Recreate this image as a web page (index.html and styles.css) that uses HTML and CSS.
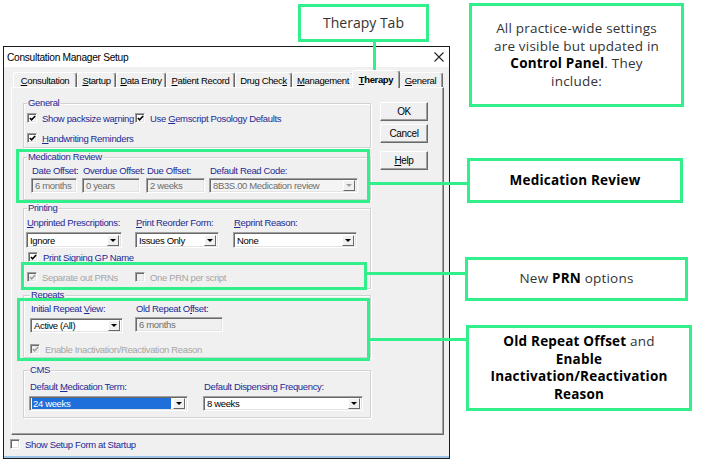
FILE: index.html
```html
<!DOCTYPE html>
<html>
<head>
<meta charset="utf-8">
<link rel="stylesheet" href="styles.css">
</head>
<body>
<div class="canvas">
  <div class="dialog">
    <div class="titlebar">
      <span class="title">Consultation Manager Setup</span>
      <svg class="close" width="10" height="10" viewBox="0 0 10 10"><path d="M0.5 0.5 L9.5 9.5 M9.5 0.5 L0.5 9.5" stroke="#222" stroke-width="1.1" fill="none"/></svg>
    </div>
    <div class="dlgbody">
      <div class="tabs">
        <div class="tab t-cons"><span><u>C</u>onsultation</span></div>
        <div class="tab t-start"><span><u>S</u>tartup</span></div>
        <div class="tab t-data"><span><u>D</u>ata Entry</span></div>
        <div class="tab t-pat"><span><u>P</u>atient Record</span></div>
        <div class="tab t-drug"><span>Drug Chec<u>k</u></span></div>
        <div class="tab t-man"><span><u>M</u>anagement</span></div>
        <div class="tab t-ther active"><span><u>T</u>herapy</span></div>
        <div class="tab t-gen"><span><u>G</u>eneral</span></div>
      </div>
      <div class="panel">
        <div class="groups">
          <fieldset class="group g-general">
            <legend>General</legend>
            <div class="row r-gen1">
              <label class="chk w-pack"><span class="cb"><svg viewBox="0 0 8 8"><path d="M1 3.4 L3 5.6 L7 1.2" /></svg></span><span class="t">Show packsize wa<u>r</u>ning</span></label>
              <label class="chk"><span class="cb"><svg viewBox="0 0 8 8"><path d="M1 3.4 L3 5.6 L7 1.2" /></svg></span><span class="t">Use <u>G</u>emscript Posology Defaults</span></label>
            </div>
            <div class="row r-gen2">
              <label class="chk"><span class="cb"><svg viewBox="0 0 8 8"><path d="M1 3.4 L3 5.6 L7 1.2" /></svg></span><span class="t"><u>H</u>andwriting Reminders</span></label>
            </div>
          </fieldset>

          <fieldset class="group g-mr">
            <legend>Medication Review</legend>
            <div class="grid mr-grid">
              <span class="lbl">Date Offset:</span>
              <span class="lbl">Overdue Offset:</span>
              <span class="lbl">Due Offset:</span>
              <span class="lbl">Default Read Code:</span>
              <span class="edit dis w46">6 months</span>
              <span class="edit dis w58">0 years</span>
              <span class="edit dis w59">2 weeks</span>
              <span class="combo dis w149"><span class="val">8B3S.00 Medication review</span><span class="btn"><i class="tri"></i></span></span>
            </div>
          </fieldset>

          <fieldset class="group g-print">
            <legend>Printing</legend>
            <div class="grid pr-grid">
              <span class="lbl"><span><u>U</u>nprinted Prescriptions:</span></span>
              <span class="lbl"><span><u>P</u>rint Reorder Form:</span></span>
              <span class="lbl"><span><u>R</u>eprint Reason:</span></span>
              <span class="combo w96"><span class="val">Ignore</span><span class="btn"><i class="tri"></i></span></span>
              <span class="combo w84"><span class="val">Issues Only</span><span class="btn"><i class="tri"></i></span></span>
              <span class="combo w124"><span class="val">None</span><span class="btn"><i class="tri"></i></span></span>
            </div>
            <div class="row r-sign">
              <label class="chk"><span class="cb"><svg viewBox="0 0 8 8"><path d="M1 3.4 L3 5.6 L7 1.2" /></svg></span><span class="t">Print <u>S</u>igning GP Name</span></label>
            </div>
            <div class="row r-prn">
              <label class="chk dis w-sep"><span class="cb"><svg viewBox="0 0 8 8"><path d="M1 3.4 L3 5.6 L7 1.2" /></svg></span><span class="t">Separate out PRNs</span></label>
              <label class="chk dis"><span class="cb"></span><span class="t">One PRN per script</span></label>
            </div>
          </fieldset>

          <fieldset class="group g-rep">
            <legend>Repeats</legend>
            <div class="grid rep-grid">
              <span class="lbl"><span>Initial Repeat <u>V</u>iew:</span></span>
              <span class="lbl"><span>Old Repeat O<u>f</u>fset:</span></span>
              <span class="combo w93"><span class="val">Active (All)</span><span class="btn"><i class="tri"></i></span></span>
              <span class="edit dis w88">6 months</span>
            </div>
            <div class="row r-enable">
              <label class="chk dis"><span class="cb"><svg viewBox="0 0 8 8"><path d="M1 3.4 L3 5.6 L7 1.2" /></svg></span><span class="t">Enable Inactivation/Reactivation Reason</span></label>
            </div>
          </fieldset>

          <fieldset class="group g-cms">
            <legend>CMS</legend>
            <div class="grid cms-grid">
              <span class="lbl"><span>Default <u>M</u>edication Term:</span></span>
              <span class="lbl">Default Dispensing Frequency:</span>
              <span class="combo w159 sel"><span class="val">24 weeks</span><span class="btn"><i class="tri"></i></span></span>
              <span class="combo w160"><span class="val">8 weeks</span><span class="btn"><i class="tri"></i></span></span>
            </div>
          </fieldset>
        </div>
        <div class="buttons">
          <div class="button b-ok">OK</div>
          <div class="button b-cancel">Cancel</div>
          <div class="button b-help"><span><u>H</u>elp</span></div>
        </div>
      </div>
      <div class="row r-footer">
        <label class="chk"><span class="cb"></span><span class="t">Show Setup Form at Startup</span></label>
      </div>
    </div>
    <div class="strip"></div>
  </div>

  <div class="hl h-mr"></div>
  <div class="hl h-prn"></div>
  <div class="hl h-rep"></div>

  <div class="wire w-tab"></div>
  <div class="dot"></div>
  <div class="wire w-mr"></div>
  <div class="wire w-prn"></div>
  <div class="wire w-rep"></div>

  <div class="callout c-tab"><span class="txt">Therapy Tab</span></div>
  <div class="callout c-info"><span class="txt">All practice-wide settings<br>are visible but updated in<br><b>Control Panel</b>. They<br>include:</span></div>
  <div class="callout c-mr"><span class="txt"><b>Medication Review</b></span></div>
  <div class="callout c-prn"><span class="txt">New <b>PRN</b> options</span></div>
  <div class="callout c-rep"><span class="txt"><b>Old Repeat Offset</b> and<br><b>Enable</b><br><b>Inactivation/Reactivation</b><br><b>Reason</b></span></div>
</div>
</body>
</html>
```
FILE: styles.css
```css
* { box-sizing: border-box; }
html, body { margin: 0; padding: 0; background: #fff; }
body { width: 716px; height: 459px; overflow: hidden; }
.canvas { position: relative; display: flow-root; width: 716px; height: 459px; }

/* ---------- dialog ---------- */
.dialog {
  margin: 46px 0 0 3px;
  width: 447px;
  height: 413px;
  border: 1px solid #1b1b1b;
  background: #f0f0f0;
  display: flex;
  flex-direction: column;
  font-family: "Liberation Sans", Arial, sans-serif;
  font-size: 9.5px;
  letter-spacing: -0.35px;
  color: #000;
}
.titlebar {
  height: 20px;
  background: #fff;
  display: flex;
  align-items: center;
  justify-content: space-between;
  padding: 0 5px 0 3px;
  font-size: 10.2px;
  letter-spacing: -0.3px;
}
.close { display: block; }
.dlgbody {
  flex: 1;
  display: flex;
  flex-direction: column;
  padding: 3px 5px 0 7px;
}
.tabs {
  display: flex;
  align-items: flex-end;
  height: 17px;
  margin-left: 2px;
}
.tab {
  height: 15px;
  border: 1px solid;
  border-color: #fff #696969 transparent #fff;
  border-bottom: none;
  border-radius: 3px 3px 0 0;
  box-shadow: inset -1px 0 0 #a0a0a0;
  display: flex;
  align-items: center;
  justify-content: center;
  white-space: nowrap;
  background: #f0f0f0;
}
.t-cons { width: 64px; }
.t-start { width: 39px; }
.t-data { width: 50px; }
.t-pat { width: 69px; }
.t-drug { width: 57px; }
.t-man { width: 62px; }
.t-ther { width: 44px; }
.t-gen { width: 45px; }
.tab.active {
  width: 48px;
  height: 18px;
  margin: 0 -2px -1px;
  font-weight: bold;
  position: relative;
  z-index: 1;
}
.panel {
  height: 348px;
  border: 1px solid;
  border-color: #fff #696969 #696969 #fff;
  box-shadow: inset -1px -1px 0 #a0a0a0;
  display: flex;
  padding: 9px 0 0 11px;
}
.groups {
  width: 348px;
  display: flex;
  flex-direction: column;
}
.group {
  margin: 0;
  padding: 0 0 0 3px;
  min-width: 0;
  border: 1px solid #cfd3d6;
  box-shadow: inset 1px 1px 0 #fff, 1px 1px 0 #fff;
  color: #1d2a93;
}
.group legend {
  padding: 0 1px;
  height: 12px;
  line-height: 12px;
  background: #f0f0f0;
}
.g-general { height: 51px; padding-top: 2px; }
.g-mr { height: 49px; margin-top: 3px; padding-top: 2px; }
.g-print { height: 87px; margin-top: 2px; padding-top: 3px; }
.g-rep { height: 69px; margin-top: 0; padding-top: 2px; padding-left: 6px; }
.g-cms { height: 54px; margin-top: 6px; padding-top: 5px; padding-left: 5px; }

.row { display: flex; align-items: center; height: 14px; }
.r-gen2 { margin-top: 6px; }
.r-sign { margin-top: 2px; padding-left: 1px; }
.r-prn { margin-top: 6px; }
.r-enable { margin-top: 9px; }
.r-footer { margin-top: 2px; margin-left: -1px; color: #1d2a93; }

.chk { display: flex; align-items: center; white-space: nowrap; }
.chk .t { white-space: pre; }
.chk .cb {
  flex: none;
  width: 10px;
  height: 10px;
  margin-right: 5px;
  background: #fff;
  border: 1px solid;
  border-color: #a0a0a0 #fff #fff #a0a0a0;
  box-shadow: inset 1px 1px 0 #696969, inset -1px -1px 0 #e3e3e3;
  display: flex;
  align-items: center;
  justify-content: center;
}
.chk .cb svg { width: 7px; height: 7px; display: block; }
.chk .cb svg path { fill: none; stroke: #000; stroke-width: 1.8; }
.chk.dis { color: #a6a6a6; }
.chk.dis .cb { background: #f0f0f0; }
.chk.dis .cb svg path { stroke: #a0a0a0; }
.w-pack { width: 108px; }
.w-sep { width: 108px; }

.grid { display: grid; }
.lbl { display: block; height: 12px; line-height: 12px; white-space: nowrap; padding-left: 1px; }
.mr-grid { grid-template-columns: 51px 64px 63px 149px; row-gap: 1px; margin-left: 4px; }
.pr-grid { grid-template-columns: 109px 98px 124px; row-gap: 3px; margin-left: -1px; }
.rep-grid { grid-template-columns: 105px 88px; row-gap: 2px; align-items: start; }
.cms-grid { grid-template-columns: 174px 160px; row-gap: 3px; }

.edit, .combo {
  display: flex;
  align-items: center;
  height: 15px;
  background: #fff;
  border: 1px solid;
  border-color: #a0a0a0 #fff #fff #a0a0a0;
  box-shadow: inset 1px 1px 0 #696969, inset -1px -1px 0 #e3e3e3;
  color: #000;
  white-space: nowrap;
  overflow: hidden;
}
.pr-grid .combo { height: 16px; }
.edit { padding-left: 3px; }
.edit.dis { background: #f0f0f0; color: #6d6d6d; }
.combo .val { flex: 1; padding-left: 3px; overflow: hidden; }
.combo .btn {
  flex: none;
  width: 12px;
  height: 11px;
  margin-right: 2px;
  border: 1px solid;
  border-color: #fff #696969 #696969 #fff;
  background: #f0f0f0;
  display: flex;
  align-items: center;
  justify-content: center;
}
.tri {
  display: block;
  width: 0;
  height: 0;
  border-top: 3px solid #000;
  border-left: 3px solid transparent;
  border-right: 3px solid transparent;
}
.combo.dis { background: #f4f4f4; color: #6d6d6d; }
.combo.dis .tri { border-top-color: #a0a0a0; }
.combo.sel .val {
  background: #1e6fd9;
  color: #fff;
  height: 11px;
  line-height: 11px;
  margin-left: 2px;
  padding-left: 1px;
  margin-right: 2px;
}
.w46 { width: 46px; }
.w58 { width: 58px; }
.w59 { width: 59px; }
.w149 { width: 149px; }
.w96 { width: 96px; }
.w84 { width: 84px; }
.w124 { width: 124px; }
.w93 { width: 93px; margin-top: 1px; }
.w88 { width: 88px; }
.w159 { width: 159px; }
.w160 { width: 160px; }

.buttons {
  width: 48px;
  margin-left: 9px;
  padding-top: 5px;
  display: flex;
  flex-direction: column;
}
.button {
  height: 19px;
  border: 1px solid;
  border-color: #fff #696969 #696969 #fff;
  box-shadow: inset -1px -1px 0 #a0a0a0;
  display: flex;
  align-items: center;
  justify-content: center;
  font-size: 10px;
}
.b-cancel { margin-top: 3px; }
.b-help { margin-top: 8px; }
.strip {
  margin-top: auto;
  height: 2px;
  background: #9cc3e6;
}

/* ---------- annotations ---------- */
.hl {
  position: absolute;
  border: 3px solid #31f08c;
}
.h-mr { left: 16px; top: 149px; width: 354px; height: 54px; }
.h-prn { left: 21px; top: 262px; width: 346px; height: 28px; }
.h-rep { left: 17px; top: 298px; width: 353px; height: 63px; }

.wire { position: absolute; background: #31f08c; }
.w-tab { left: 373px; top: 41px; width: 3px; height: 33px; }
.w-mr { left: 369px; top: 182px; width: 98px; height: 3px; }
.w-prn { left: 366px; top: 272px; width: 99px; height: 3px; }
.w-rep { left: 369px; top: 338px; width: 97px; height: 3px; }
.dot {
  position: absolute;
  left: 371px;
  top: 71px;
  width: 7px;
  height: 7px;
  border-radius: 50%;
  background: #31f08c;
}

.callout {
  position: absolute;
  border: 3px solid #31f08c;
  background: #fff;
  display: flex;
  align-items: center;
  justify-content: center;
  text-align: center;
  font-family: "Open Sans", "DejaVu Sans", sans-serif;
  font-size: 13.5px;
  letter-spacing: 0.2px;
  color: #333;
  line-height: 17.5px;
}
.callout .txt { display: block; }
.callout b { color: #000; font-weight: 700; }
.c-tab { left: 298px; top: 4px; width: 131px; height: 38px; font-size: 14px; letter-spacing: 0; }
.c-info { left: 469px; top: 3px; width: 215px; height: 104px; }
.c-mr { left: 467px; top: 158px; width: 216px; height: 45px; }
.c-prn { left: 465px; top: 257px; width: 223px; height: 44px; }
.c-rep { left: 466px; top: 325px; width: 226px; height: 86px; }
```
